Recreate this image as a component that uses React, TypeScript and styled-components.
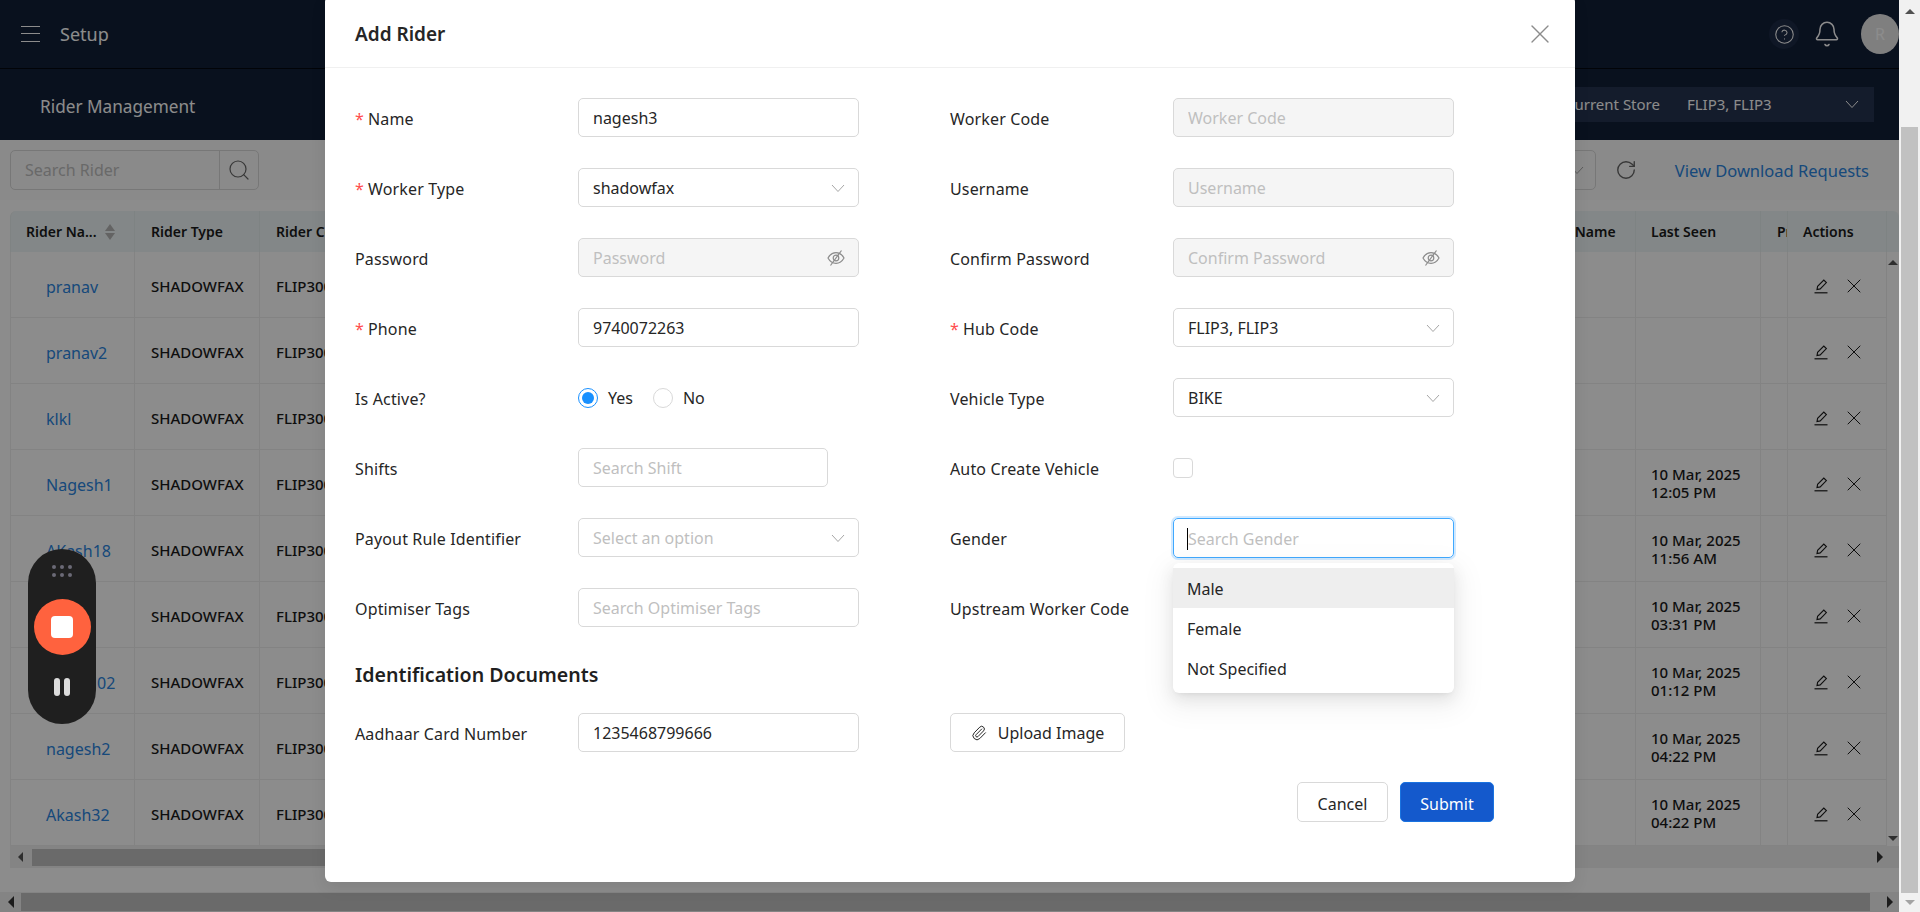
import React from "react";
import styled, { createGlobalStyle } from "styled-components";
import { Bell, CircleHelp, RotateCw, Search, X, Paperclip } from "lucide-react";

const Global = createGlobalStyle`
  html, body { margin: 0; padding: 0; height: 912px; overflow: hidden; background: #fff; }
  body { font-family: "Noto Sans", "Open Sans", sans-serif; font-size: 16px; color: #262626; }
  * { box-sizing: border-box; }
  input::placeholder { color: #bfbfbf; opacity: 1; }
`;

const Shell = styled.div`
  width: 1920px; height: 912px; display: flex; overflow: hidden;
`;
const Main = styled.div`
  position: relative; width: 1899px; height: 912px; display: flex; flex-direction: column; background: #fff; overflow: hidden;
`;
const TopBar = styled.header`
  height: 69px; flex: none; background: #121f38; border-bottom: 1px solid #05080f;
  display: flex; align-items: center; padding-left: 21px; color: #fff;
`;
const MenuLines = styled.span`
  width: 19px; height: 16px; flex: none; margin-right: 20px;
  border-top: 1.5px solid #fff; border-bottom: 1.5px solid #fff; position: relative;
  &::after { content: ""; position: absolute; left: 0; right: 0; top: 5.5px; height: 1.5px; background: #fff; }
`;
const SetupText = styled.span`font-size: 18px; flex: 1;`;
const HelpBubble = styled.span`
  width: 30px; height: 30px; border-radius: 50%; background: #1c2a45; display: flex; align-items: center; justify-content: center; margin-right: 14px; color: #fff;
`;
const BellWrap = styled.span`display: flex; margin-right: 20px; color: #fff;`;
const Avatar = styled.span`
  width: 38px; height: 40px; border-radius: 50%; background: #e8e8e8; color: #fff;
  display: flex; align-items: center; justify-content: center; font-size: 16px; flex: none;
`;
const SubBar = styled.div`
  height: 71px; flex: none; background: #121f38; display: flex; align-items: center; justify-content: space-between; padding: 0 25px 0 40px; color: #fff;
`;
const PageTitle = styled.div`font-size: 17.2px; margin-top: 3px;`;
const StoreBox = styled.div`
  width: 320px; height: 35px; background: #263350; display: flex; align-items: center; padding: 0 0 2px 11px; font-size: 15px;
`;
const StoreLabel = styled.span`margin-right: 27px;`;
const StoreValue = styled.span`flex: 1;`;
const Toolbar = styled.div`
  height: 60px; flex: none; background: #fbfbfb; display: flex; align-items: center; padding: 0 30px 0 10px;
`;
const SearchGroup = styled.div`
  width: 249px; height: 40px; border: 1px solid #d9d9d9; border-radius: 5px; display: flex; align-items: center;
`;
const SearchField = styled.span`flex: 1; padding-left: 14px; color: #bfbfbf; font-size: 16px;`;
const SearchBtn = styled.span`
  width: 39px; height: 38px; border-left: 1px solid #d9d9d9; display: flex; align-items: center; justify-content: center; color: #666;
`;
const FilterBox = styled.div`
  margin-left: auto; width: 130px; height: 40px; border: 1px solid #d9d9d9; border-radius: 5px; display: flex; align-items: center; justify-content: flex-end; padding-right: 11px; color: #bfbfbf;
`;
const Refresh = styled.span`display: flex; margin: 0 38px 0 19px; color: #666;`;
const DownloadLink = styled.a`color: #2a85e0; font-size: 16.5px;`;

const TableArea = styled.div`
  margin: 11px 0 0 10px; flex: none; width: 1889px; position: relative;
`;
const cols = "124px 125px 1251px 125px 125px 27px 99px 12px";
const HeadRow = styled.div`
  display: grid; grid-template-columns: ${cols}; height: 41px; background: #eff6f7; border-radius: 6px 6px 0 0; border-left: 1px solid #e8eeee;
`;
const HeadCell = styled.div<{ $pad?: number }>`
  display: flex; align-items: center; padding-left: ${p => p.$pad ?? 16}px; font-size: 14px; font-weight: 600; color: #1a1a1a; border-right: 1px solid #e6eeee; overflow: hidden; white-space: nowrap; gap: 8px;
`;
const SortIcon = styled.span`
  display: inline-flex; flex-direction: column; gap: 2px;
  &::before, &::after { content: ""; border-left: 5px solid transparent; border-right: 5px solid transparent; }
  &::before { border-bottom: 7px solid #b5b5b5; }
  &::after { border-top: 7px solid #b5b5b5; }
`;
const Row = styled.div`
  display: grid; grid-template-columns: ${cols}; height: 66px; border-left: 1px solid #eeeeee;
`;
const Cell = styled.div<{ $pad?: number }>`
  display: flex; align-items: center; padding-left: ${p => p.$pad ?? 16}px; padding-top: 2px; font-size: 15px; font-weight: 500; color: #1a1a1a; border-right: 1px solid #eeeeee; border-bottom: 1px solid #eeeeee; overflow: hidden; white-space: nowrap; line-height: 18px;
`;
const NameCell = styled(Cell)`padding-left: 35px; padding-top: 4px; font-size: 16px; font-weight: 400; color: #2a85e0;`;
const ActionCell = styled(Cell)`padding-left: 25px; gap: 13px; color: #1a1a1a;`;
const SeenText = styled.span`display: block; margin-top: -2px;`;
const SideArrows = styled.div`
  position: absolute; right: 0; top: 41px; bottom: 22px; width: 12px;
  display: flex; flex-direction: column; justify-content: space-between; align-items: center; padding: 8px 0 5px;
`;
const Tri = styled.span<{ $dir: "u" | "d" | "l" | "r"; $c?: string; $s?: number }>`
  width: 0; height: 0; flex: none; display: block;
  ${p => { const c = p.$c ?? "#555"; const s = p.$s ?? 5;
    if (p.$dir === "u") return `border-left:${s}px solid transparent;border-right:${s}px solid transparent;border-bottom:${s}px solid ${c};`;
    if (p.$dir === "d") return `border-left:${s}px solid transparent;border-right:${s}px solid transparent;border-top:${s}px solid ${c};`;
    if (p.$dir === "l") return `border-top:${s}px solid transparent;border-bottom:${s}px solid transparent;border-right:${s}px solid ${c};`;
    return `border-top:${s}px solid transparent;border-bottom:${s}px solid transparent;border-left:${s}px solid ${c};`;
  }}
`;
const HScroll = styled.div<{ $h: number; $pad: number; $mr: number }>`
  height: ${p => p.$h}px; background: #f1f1f1; display: flex; align-items: center; padding-left: ${p => p.$pad}px; padding-right: ${p => p.$mr}px; flex: none;
`;
const HThumb = styled.div<{ $w: number; $h: number; $gap: number }>`
  width: ${p => p.$w}px; height: ${p => p.$h}px; background: #c1c1c1; margin: 0 auto 0 ${p => p.$gap}px;
`;
const PageScrollGap = styled.div`flex: 1;`;
const VBar = styled.div`
  width: 21px; height: 912px; flex: none; background: #f1f1f1; display: flex; flex-direction: column; align-items: center; padding-top: 9px;
`;
const VThumb = styled.div`width: 17px; height: 766px; background: #c1c1c1; margin-top: 113px;`;
const VDown = styled.div`margin-top: auto; margin-bottom: 7px;`;

const Overlay = styled.div`position: absolute; inset: 0; background: rgba(0,0,0,.45);`;
const Modal = styled.div`
  position: absolute; left: 325px; top: -4px; width: 1250px; height: 886px; background: #fff; border-radius: 6px;
  box-shadow: 0 6px 16px rgba(0,0,0,.08); display: flex; flex-direction: column;
`;
const ModalHead = styled.div`
  height: 72px; flex: none; border-bottom: 1px solid #f0f0f0; display: flex; align-items: center; justify-content: space-between; padding: 4px 19px 0 30px;
`;
const ModalTitle = styled.div`font-size: 19px; font-weight: 600; color: #262626;`;
const CloseBtn = styled.span`display: flex; color: #8c8c8c;`;
const ModalBody = styled.div`padding: 30px 81px 0 30px; display: flex; flex-direction: column;`;
const FormGrid = styled.div`
  display: grid; grid-template-columns: 223px 281px 91px 223px 281px; row-gap: 31px; align-items: center;
`;
const Label = styled.label<{ $col?: number }>`
  grid-column: ${p => p.$col ?? 1}; font-size: 16px; color: #262626; line-height: 43px; height: 39px; white-space: nowrap; letter-spacing: .15px;
`;
const Star = styled.span`color: #ff4d4f; margin-right: 4px; font-size: 16px;`;
const Field = styled.div<{ $col?: number }>`grid-column: ${p => p.$col ?? 2}; height: 39px; position: relative;`;
const Input = styled.input<{ $w?: number }>`
  width: ${p => p.$w ? `${p.$w}px` : "100%"}; height: 39px; border: 1px solid #d9d9d9; border-radius: 5px; padding: 1px 14px 0 14px; font: 16px "Noto Sans", sans-serif; color: #262626; background: #fff; outline: none;
  &:disabled { background: #f5f5f5; }
`;
const FocusBox = styled.div`
  height: 40px; border: 1px solid #40a9ff; border-radius: 5px; box-shadow: 0 0 0 2px rgba(24,144,255,.2); padding: 1px 0 0 14px; display: flex; align-items: center; font-size: 16px; color: #bfbfbf; position: relative;
  &::before { content: ""; position: absolute; left: 13px; top: 9px; width: 1px; height: 22px; background: #000; }
`;
const SelectBox = styled.div<{ $ph?: boolean }>`
  height: 39px; border: 1px solid #d9d9d9; border-radius: 5px; padding: 1px 13px 0 14px; display: flex; align-items: center; justify-content: space-between; font-size: 16px; color: ${p => p.$ph ? "#bfbfbf" : "#262626"}; background: #fff;
`;
const RightIcon = styled.span`position: absolute; right: 14px; top: 11px; display: flex; color: #8c8c8c;`;
const RadioRow = styled.div`display: flex; align-items: center; height: 39px; font-size: 16px; color: #262626;`;
const Radio = styled.span<{ $on?: boolean }>`
  width: 20px; height: 20px; border-radius: 50%; border: 1px solid ${p => p.$on ? "#1890ff" : "#d9d9d9"}; position: relative; flex: none; margin-right: 10px;
  ${p => p.$on ? `&::after{content:"";position:absolute;inset:3px;border-radius:50%;background:#1890ff;}` : ""}
`;
const RadioText = styled.span`margin-right: 20px;`;
const Checkbox = styled.span`display: block; width: 20px; height: 20px; border: 1px solid #d9d9d9; border-radius: 4px; margin-top: 10px;`;
const Menu = styled.div`
  position: absolute; left: 0; right: 0; top: 45px; height: 130px; background: #fff; border-radius: 6px; padding: 5px 0;
  box-shadow: 0 6px 16px rgba(0,0,0,.08), 0 3px 6px -4px rgba(0,0,0,.12), 0 9px 28px 8px rgba(0,0,0,.05); z-index: 2;
`;
const Option = styled.div<{ $active?: boolean }>`
  height: 40px; padding: 1px 0 0 14px; display: flex; align-items: center; font-size: 16px; color: #262626; background: ${p => p.$active ? "#eeeeee" : "transparent"};
`;
const SectionTitle = styled.h3`margin: 35px 0 25px; font-size: 19.6px; font-weight: 600; line-height: 26px; color: #1f1f1f;`;
const UploadBtn = styled.button`
  grid-column: 4; justify-self: start; width: 175px; height: 39px; padding: 1px 0 0; background: #fff; border: 1px solid #d9d9d9; border-radius: 5px; font: 16px "Noto Sans", sans-serif; color: #262626; display: flex; align-items: center; justify-content: center; gap: 11px;
`;
const Footer = styled.div`display: flex; justify-content: flex-end; gap: 12px; margin-top: 30px;`;
const Btn = styled.button<{ $primary?: boolean; $w: number }>`
  width: ${p => p.$w}px; height: 40px; padding: 3px 0 0; border-radius: 5px; font: 16px "Noto Sans", sans-serif;
  background: ${p => p.$primary ? "#1459cc" : "#fff"}; color: ${p => p.$primary ? "#fff" : "#262626"};
  border: 1px solid ${p => p.$primary ? "#1a73e0" : "#d9d9d9"};
`;

const Recorder = styled.div`
  position: absolute; left: 28px; top: 549px; width: 68px; height: 175px; border-radius: 34px; background: #1f1f1f;
  display: flex; flex-direction: column; align-items: center; padding-top: 16px;
`;
const Grip = styled.div`display: grid; grid-template-columns: repeat(3, 4px); gap: 4px;`;
const GripDot = styled.span`width: 4px; height: 4px; border-radius: 50%; background: #6b6a76;`;
const RecBtn = styled.div`
  width: 57px; height: 56px; border-radius: 50%; background: #ff623e; margin-top: 22px; display: flex; align-items: center; justify-content: center;
`;
const RecStop = styled.span`width: 22px; height: 22px; border-radius: 4px; background: #fff;`;
const Pause = styled.div`display: flex; gap: 4px; margin-top: 23px;`;
const PauseBar = styled.span`width: 6px; height: 18px; border-radius: 3px; background: #dcdcdc;`;

const Chevron = ({ size = 14, color = "#a6a6a6" }: { size?: number; color?: string }) => (
  <svg width={size} height={size} viewBox="0 0 14 14" fill="none" stroke={color} strokeWidth="1"><path d="M1 4l6 6.5L13 4" /></svg>
);
const EyeOff = () => (
  <svg width="18" height="18" viewBox="0 0 18 18" fill="none" stroke="#8c8c8c" strokeWidth="1.2">
    <path d="M1 9c2-3.600 4.700-5.400 8-5.400S15 5.400 17 9c-2 3.600-4.700 5.400-8 5.400S3 12.600 1 9z" />
    <circle cx="9" cy="9" r="2.800" />
    <path d="M14.500 1.500L3.500 16.500" />
  </svg>
);
const EditIcon = () => (
  <svg width="16" height="16" viewBox="0 0 16 16" fill="none" stroke="#1a1a1a" strokeWidth="1.1">
    <path d="M4 11.500l.6-3.200L10.800 2l2.600 2.600-6.200 6.300z" />
    <path d="M1.500 14.800h13" strokeWidth="1.2" />
  </svg>
);

const rows: [string, string[]][] = [
  ["pranav", []], ["pranav2", []], ["klkl", []],
  ["Nagesh1", ["10 Mar, 2025", "12:05 PM"]],
  ["AKash18", ["10 Mar, 2025", "11:56 AM"]],
  ["rider", ["10 Mar, 2025", "03:31 PM"]],
  ["AKASH02", ["10 Mar, 2025", "01:12 PM"]],
  ["nagesh2", ["10 Mar, 2025", "04:22 PM"]],
  ["Akash32", ["10 Mar, 2025", "04:22 PM"]],
];
const dots = [0, 1, 2, 3, 4, 5];

const ReqLabel = ({ col, text }: { col?: number; text: string }) => (
  <Label $col={col}><Star>*</Star>{text}</Label>
);

export default function App() {
  return (
    <Shell>
      <Global />
      <Main>
        <TopBar>
          <MenuLines />
          <SetupText>Setup</SetupText>
          <HelpBubble><CircleHelp size={21} strokeWidth={1.2} /></HelpBubble>
          <BellWrap><Bell size={28} strokeWidth={1.3} /></BellWrap>
          <Avatar>R</Avatar>
        </TopBar>
        <SubBar>
          <PageTitle>Rider Management</PageTitle>
          <StoreBox>
            <StoreLabel>Current Store</StoreLabel>
            <StoreValue>FLIP3, FLIP3</StoreValue>
            <Chevron size={14} color="#fff" />
            <span style={{ width: 15 }} />
          </StoreBox>
        </SubBar>
        <Toolbar>
          <SearchGroup>
            <SearchField>Search Rider</SearchField>
            <SearchBtn><Search size={24} strokeWidth={1.2} /></SearchBtn>
          </SearchGroup>
          <FilterBox><Chevron size={14} /></FilterBox>
          <Refresh><RotateCw size={22} strokeWidth={1.5} /></Refresh>
          <DownloadLink>View Download Requests</DownloadLink>
        </Toolbar>
        <TableArea>
          <HeadRow>
            <HeadCell $pad={15}>Rider Na... <SortIcon /></HeadCell>
            <HeadCell>Rider Type</HeadCell>
            <HeadCell>Rider Code</HeadCell>
            <HeadCell $pad={24}>Store Name</HeadCell>
            <HeadCell $pad={15}>Last Seen</HeadCell>
            <HeadCell>Profile</HeadCell>
            <HeadCell $pad={15}>Actions</HeadCell>
          </HeadRow>
          {rows.map(([name, seen]) => (
            <Row key={name}>
              <NameCell>{name}</NameCell>
              <Cell>SHADOWFAX</Cell>
              <Cell>FLIP3001</Cell>
              <Cell />
              <Cell $pad={15}>{seen.length ? <SeenText>{seen[0]}<br />{seen[1]}</SeenText> : null}</Cell>
              <Cell />
              <ActionCell><EditIcon /><X size={24} strokeWidth={1} /></ActionCell>
            </Row>
          ))}
          <SideArrows><Tri $dir="u" $s={5} /><Tri $dir="d" $s={5} /></SideArrows>
          <HScroll $h={22} $pad={8} $mr={16}>
            <Tri $dir="l" $s={5} />
            <HThumb $gap={9} $w={1500} $h={17} />
            <Tri $dir="r" $s={6} $c="#333" />
          </HScroll>
        </TableArea>
        <PageScrollGap />
        <HScroll $h={20} $pad={8} $mr={6}>
          <Tri $dir="l" $s={6} $c="#333" />
          <HThumb $gap={7} $w={1849} $h={18} />
          <Tri $dir="r" $s={6} $c="#333" />
        </HScroll>
        <Overlay />
        <Modal>
          <ModalHead>
            <ModalTitle>Add Rider</ModalTitle>
            <CloseBtn><X size={32} strokeWidth={1} /></CloseBtn>
          </ModalHead>
          <ModalBody>
            <FormGrid>
              <ReqLabel text="Name" />
              <Field><Input defaultValue="nagesh3" /></Field>
              <Label $col={4}>Worker Code</Label>
              <Field $col={5}><Input disabled placeholder="Worker Code" /></Field>

              <ReqLabel text="Worker Type" />
              <Field><SelectBox>shadowfax<Chevron /></SelectBox></Field>
              <Label $col={4}>Username</Label>
              <Field $col={5}><Input disabled placeholder="Username" /></Field>

              <Label>Password</Label>
              <Field><Input disabled placeholder="Password" /><RightIcon><EyeOff /></RightIcon></Field>
              <Label $col={4}>Confirm Password</Label>
              <Field $col={5}><Input disabled placeholder="Confirm Password" /><RightIcon><EyeOff /></RightIcon></Field>

              <ReqLabel text="Phone" />
              <Field><Input defaultValue="9740072263" /></Field>
              <ReqLabel col={4} text="Hub Code" />
              <Field $col={5}><SelectBox>FLIP3, FLIP3<Chevron /></SelectBox></Field>

              <Label>Is Active?</Label>
              <Field>
                <RadioRow>
                  <Radio $on /><RadioText>Yes</RadioText>
                  <Radio /><span>No</span>
                </RadioRow>
              </Field>
              <Label $col={4}>Vehicle Type</Label>
              <Field $col={5}><SelectBox>BIKE<Chevron /></SelectBox></Field>

              <Label>Shifts</Label>
              <Field><Input $w={250} placeholder="Search Shift" /></Field>
              <Label $col={4}>Auto Create Vehicle</Label>
              <Field $col={5}><Checkbox /></Field>

              <Label>Payout Rule Identifier</Label>
              <Field><SelectBox $ph>Select an option<Chevron /></SelectBox></Field>
              <Label $col={4}>Gender</Label>
              <Field $col={5}>
                <FocusBox>Search Gender</FocusBox>
                <Menu>
                  <Option $active>Male</Option>
                  <Option>Female</Option>
                  <Option>Not Specified</Option>
                </Menu>
              </Field>

              <Label>Optimiser Tags</Label>
              <Field><Input placeholder="Search Optimiser Tags" /></Field>
              <Label $col={4}>Upstream Worker Code</Label>
              <Field $col={5}><Input /></Field>
            </FormGrid>
            <SectionTitle>Identification Documents</SectionTitle>
            <FormGrid>
              <Label>Aadhaar Card Number</Label>
              <Field><Input defaultValue="1235468799666" /></Field>
              <UploadBtn><Paperclip size={16} strokeWidth={1.5} />Upload Image</UploadBtn>
            </FormGrid>
            <Footer>
              <Btn $w={91}>Cancel</Btn>
              <Btn $w={94} $primary>Submit</Btn>
            </Footer>
          </ModalBody>
        </Modal>
        <Recorder>
          <Grip>{dots.map(d => <GripDot key={d} />)}</Grip>
          <RecBtn><RecStop /></RecBtn>
          <Pause><PauseBar /><PauseBar /></Pause>
        </Recorder>
      </Main>
      <VBar>
        <Tri $dir="u" $s={5} $c="#505050" />
        <VThumb />
        <VDown><Tri $dir="d" $s={5} $c="#a3a3a3" /></VDown>
      </VBar>
    </Shell>
  );
}
